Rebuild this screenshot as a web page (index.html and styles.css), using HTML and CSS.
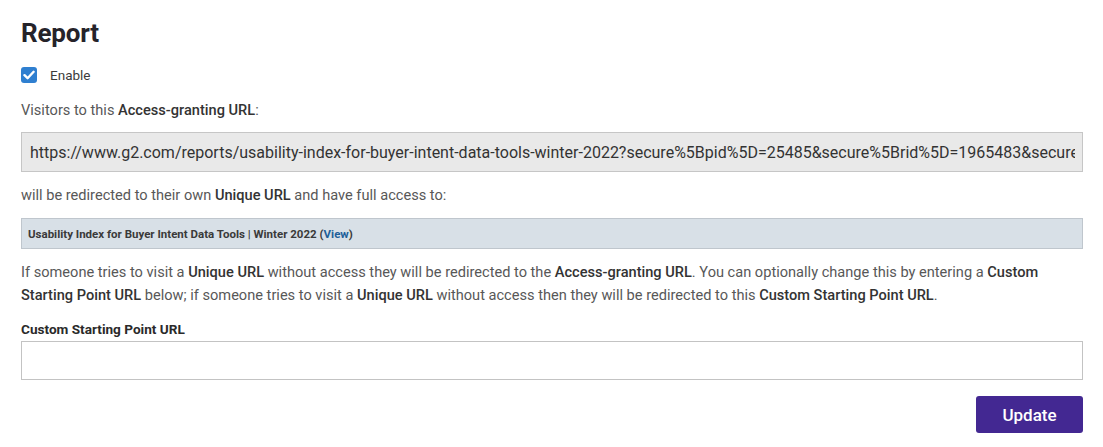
FILE: index.html
```html
<!DOCTYPE html>
<html>
<head>
<meta charset="utf-8">
<link rel="stylesheet" href="styles.css">
</head>
<body>
<div class="page">
  <h1 class="title">Report</h1>
  <label class="check-row">
    <span class="checkbox">
      <svg width="12" height="10" viewBox="0 0 12 10"><path d="M1.5 5.2 L4.6 8.2 L10.6 1.8" fill="none" stroke="#fff" stroke-width="2.4" stroke-linecap="round" stroke-linejoin="round"/></svg>
    </span>
    <span class="check-label">Enable</span>
  </label>
  <p class="text visitors">Visitors to this <b>Access-granting URL</b>:</p>
  <div class="url-box"><span class="url-text">https://www.g2.com/reports/usability-index-for-buyer-intent-data-tools-winter-2022?secure%5Bpid%5D=25485&amp;secure%5Brid%5D=1965483&amp;secure%5Bsig%5D=8f2a</span></div>
  <p class="text redirect">will be redirected to their own <b>Unique URL</b> and have full access to:</p>
  <div class="report-box">Usability Index for Buyer Intent Data Tools | Winter 2022 <span class="view">(<a href="#">View</a>)</span></div>
  <p class="text para">If someone tries to visit a <b>Unique URL</b> without access they will be redirected to the <b>Access-granting URL</b>. You can optionally change this by entering a <b>Custom Starting Point URL</b> below; if someone tries to visit a <b>Unique URL</b> without access then they will be redirected to this <b>Custom Starting Point URL</b>.</p>
  <label class="field-label">Custom Starting Point URL</label>
  <div class="input"></div>
  <div class="actions"><button class="btn">Update</button></div>
</div>
</body>
</html>
```
FILE: styles.css
```css
html, body { margin: 0; padding: 0; background: #fff; }
body { font-family: Roboto, "Liberation Sans", sans-serif; color: #555; }
.page { padding: 16px 20px 0 21px; }
.title { margin: 0; font-size: 26px; font-weight: 700; color: #25232a; line-height: 34px; height: 34px; letter-spacing: -0.2px; }
.check-row { display: flex; align-items: center; margin-top: 17px; height: 16px; }
.checkbox { width: 16px; height: 16px; border-radius: 3px; background: #2f7fd0; display: flex; align-items: center; justify-content: center; }
.check-label { margin-left: 13px; font-size: 13.5px; color: #3c3c3c; }
.text { margin: 0; font-size: 14.6px; line-height: 23px; color: #585858; }
.text b { color: #333; font-weight: 500; }
.visitors { margin-top: 16px; }
.url-box { margin-top: 10px; height: 38px; border: 1px solid #c6c6c6; background: #e9e9e9; padding: 0 7px 0 8px; display: flex; align-items: center; overflow: hidden; white-space: nowrap; }
.url-text { font-size: 16px; color: #333; overflow: hidden; }
.redirect { margin-top: 12px; }
.report-box { margin-top: 11px; height: 29px; border: 1px solid #bfc6cd; background: #d8e0e7; padding: 0 6px; display: flex; align-items: center; font-size: 11.5px; font-weight: 700; color: #3a3a3a; white-space: pre; }
.view { font-weight: 700; }
.view a { color: #1e5f99; text-decoration: none; }
.para { margin-top: 12px; }
.field-label { display: block; margin-top: 13px; font-size: 13.6px; font-weight: 700; color: #2a2a2a; line-height: 18px; }
.input { margin-top: 3px; height: 37px; border: 1px solid #c3c3c3; background: #fff; }
.actions { display: flex; justify-content: flex-end; margin-top: 16px; }
.btn { width: 107px; height: 37px; border: 0; border-radius: 3px; background: #432892; color: #fff; font-family: Roboto, "Liberation Sans", sans-serif; font-size: 17px; font-weight: 500; }
```
